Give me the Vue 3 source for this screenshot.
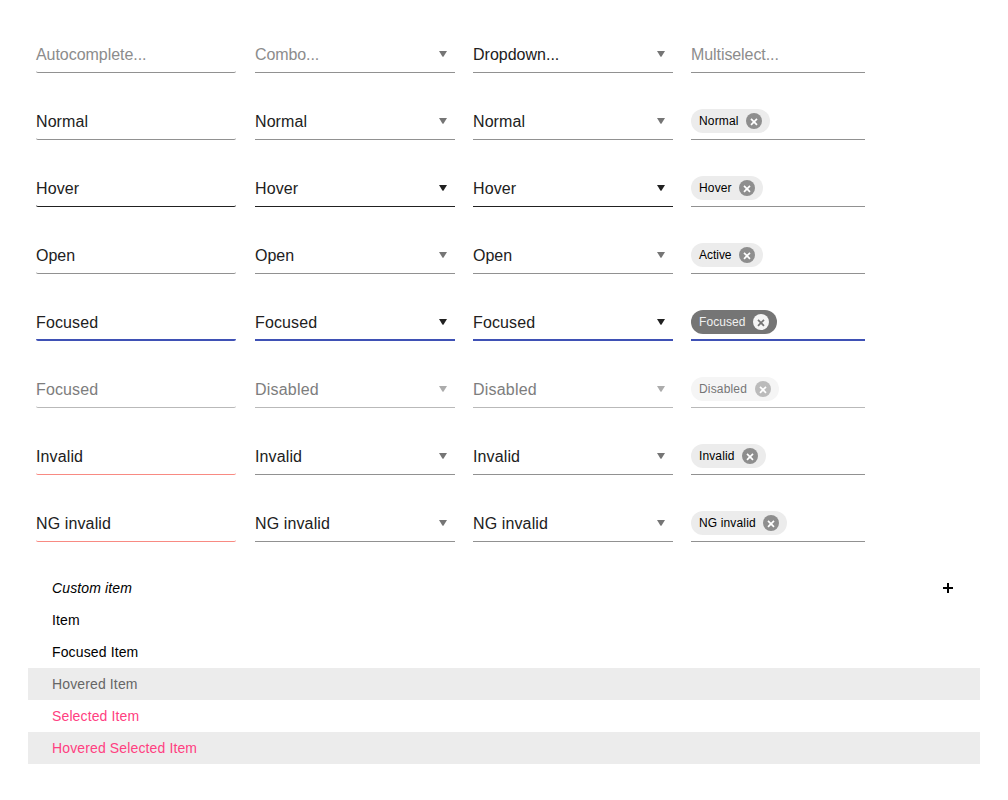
<script setup>
const rows = [
  { labels: ['Autocomplete...', 'Combo...', 'Dropdown...', 'Multiselect...'], state: 'placeholder' },
  { labels: ['Normal', 'Normal', 'Normal', 'Normal'], state: 'normal' },
  { labels: ['Hover', 'Hover', 'Hover', 'Hover'], state: 'hover' },
  { labels: ['Open', 'Open', 'Open', 'Active'], state: 'open' },
  { labels: ['Focused', 'Focused', 'Focused', 'Focused'], state: 'focused' },
  { labels: ['Focused', 'Disabled', 'Disabled', 'Disabled'], state: 'disabled' },
  { labels: ['Invalid', 'Invalid', 'Invalid', 'Invalid'], state: 'invalid' },
  { labels: ['NG invalid', 'NG invalid', 'NG invalid', 'NG invalid'], state: 'invalid' },
]
const kinds = ['auto', 'combo', 'drop', 'multi']

// Letter spacing per field label, in px
const spacing = {
  'Autocomplete...': -0.05,
  'Combo...': -0.1,
  'Multiselect...': -0.08,
  Normal: 0.08,
  Hover: 0.12,
  Focused: 0.12,
  Disabled: 0.2,
  Invalid: 0.12,
  'NG invalid': 0.12,
}

// Label width and letter spacing inside each chip, in px
const chips = {
  Normal: [39, 0.15],
  Hover: [32, 0.15],
  Active: [32, -0.03],
  Focused: [46, 0.08],
  Disabled: [48, 0.16],
  Invalid: [35, 0.12],
  'NG invalid': [56, 0.14],
}
const valueStyle = (label) => ({ letterSpacing: (spacing[label] || 0) + 'px' })
const chipStyle = (label) => ({
  width: chips[label][0] + 'px',
  letterSpacing: chips[label][1] + 'px',
})

const items = [
  { text: 'Custom item', cls: 'custom' },
  { text: 'Item', cls: '' },
  { text: 'Focused Item', cls: '' },
  { text: 'Hovered Item', cls: 'hovered' },
  { text: 'Selected Item', cls: 'selected' },
  { text: 'Hovered Selected Item', cls: 'hovered selected' },
]
</script>

<template>
  <main class="page">
    <section class="grid">
      <div v-for="(row, r) in rows" :key="r" class="row">
        <div v-for="(kind, k) in kinds" :key="kind" class="field" :class="[kind, row.state]">
          <span v-if="kind === 'multi' && r > 0" class="chip">
            <span class="chip-label" :style="chipStyle(row.labels[k])">{{ row.labels[k] }}</span>
            <svg class="close" viewBox="0 0 16 16">
              <circle cx="8" cy="8" r="8" />
              <path d="M5 5.8l6 6M11 5.8l-6 6" />
            </svg>
          </span>
          <span v-else class="value" :style="valueStyle(row.labels[k])">{{ row.labels[k] }}</span>
          <svg v-if="kind === 'combo' || kind === 'drop'" class="arrow" viewBox="0 0 8 6">
            <path d="M0 0h8L4.6 5.4a.8.8 0 0 1-1.2 0z" />
          </svg>
        </div>
      </div>
    </section>
    <ul class="list">
      <li v-for="item in items" :key="item.text" :class="item.cls">
        <span>{{ item.text }}</span>
        <svg v-if="item.cls === 'custom'" class="plus" viewBox="0 0 10 10">
          <path d="M4 0h2v4h4v2H6v4H4V6H0V4h4z" />
        </svg>
      </li>
    </ul>
  </main>
</template>

<style>
body {
  margin: 0;
  background: #fff;
}
</style>

<style scoped>
.page {
  box-sizing: border-box;
  width: 1008px;
  height: 800px;
  padding: 37px 28px 0;
  font-family: "Liberation Sans", Arial, sans-serif;
}
.grid {
  display: grid;
  row-gap: 31px;
  padding-left: 8px;
}
.row {
  display: grid;
  grid-template-columns: 201px 200px 200px 174px;
  column-gap: 18px;
}
.field {
  box-sizing: border-box;
  display: flex;
  align-items: center;
  justify-content: space-between;
  height: 36px;
  border-bottom: 1px solid #919191;
  color: #212121;
  font-size: 16px;
}
.auto {
  width: 200px;
  border-radius: 2px;
}
.value {
  line-height: 20px;
  white-space: nowrap;
}
.placeholder:not(.drop) .value {
  color: #8c8c8c;
}
.arrow {
  width: 8px;
  height: 6px;
  margin: 0 8px 2px 0;
  fill: #757575;
}
.hover:not(.multi) {
  border-bottom-color: #212121;
}
.hover .arrow,
.focused .arrow {
  fill: #212121;
}
.focused {
  border-bottom: 2px solid #3f51b5;
  padding-top: 1px;
}
.disabled {
  border-bottom-color: #b9b9b9;
  color: #7d7d7d;
}
.disabled .arrow {
  fill: #acacac;
}
.invalid.auto {
  border-bottom-color: #f88a82;
}
.chip {
  box-sizing: border-box;
  display: flex;
  align-items: center;
  gap: 8px;
  height: 24px;
  margin-bottom: 2px;
  padding: 0 8px;
  border-radius: 12px;
  background: #ececec;
  color: #000;
  font-size: 12px;
}
.chip-label {
  white-space: nowrap;
}
.close {
  width: 16px;
  height: 16px;
  fill: #8e8e8e;
}
.close path {
  fill: none;
  stroke: #fff;
  stroke-width: 1.7;
}
.focused .chip {
  background: #757575;
  color: #f0f0f0;
}
.focused .close {
  fill: #f5f5f5;
}
.focused .close path {
  stroke: #757575;
}
.disabled .chip {
  background: #f5f5f5;
  color: #757575;
}
.disabled .close {
  fill: #bbb;
}
.disabled .close path {
  stroke: #fff;
}
.list {
  margin: 30px 0 0;
  padding: 0;
  list-style: none;
}
.list li {
  box-sizing: border-box;
  display: flex;
  align-items: center;
  justify-content: space-between;
  height: 32px;
  padding: 0 27px 0 24px;
  color: #000;
  font-size: 14px;
  letter-spacing: 0.13px;
}
.list .custom {
  font-style: italic;
}
.list .hovered {
  background: #ececec;
  color: #666;
}
.list .selected {
  color: #ff4081;
}
.plus {
  width: 10px;
  height: 10px;
}
</style>
